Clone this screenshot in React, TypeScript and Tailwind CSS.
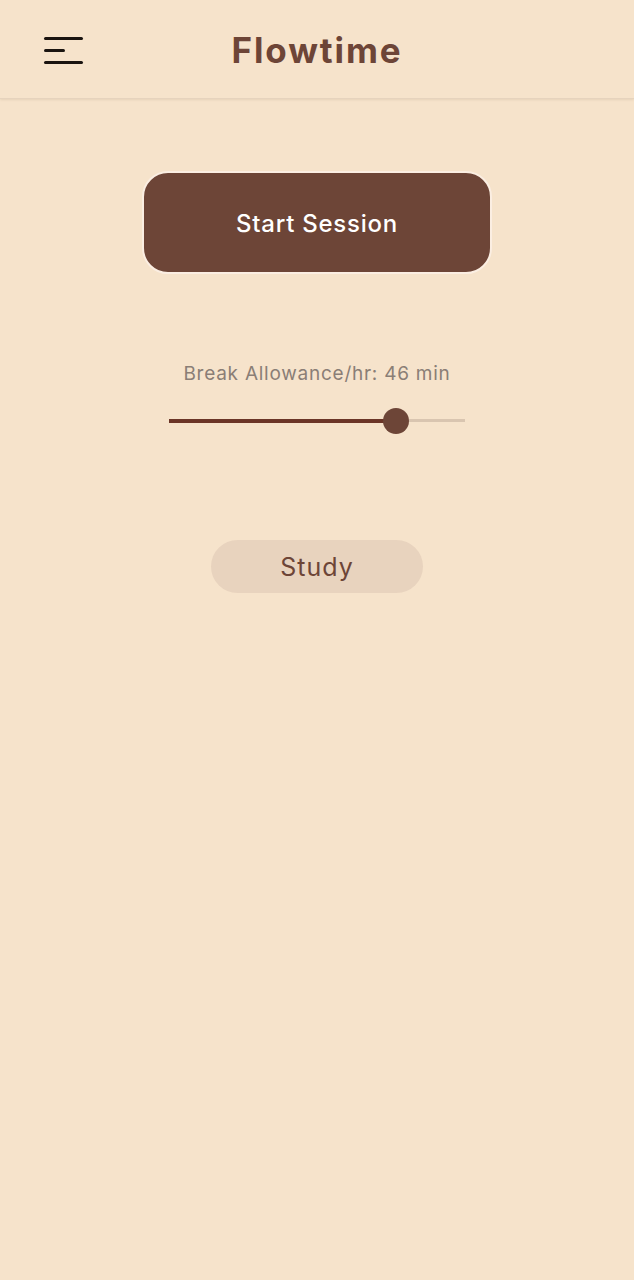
const App = () => {
  const value = 46;
  const pct = ((value - 0) / 60) * 100;

  return (
    <div className="min-h-screen w-full bg-[#f6e3cb] font-['Inter',sans-serif]">
      <header className="relative flex h-[99px] items-center justify-center border-b border-[#e6d3bd] shadow-[0_1px_2px_rgba(120,90,60,0.12)]">
        <button className="absolute left-[44px] top-[37px] flex w-[40px] flex-col gap-[9px]">
          <span className="block h-[3px] w-[39px] rounded-full bg-[#1a1410]" />
          <span className="block h-[3px] w-[21px] rounded-full bg-[#1a1410]" />
          <span className="block h-[3px] w-[39px] rounded-full bg-[#1a1410]" />
        </button>
        <h1 className="mt-[3px] text-[35px] font-bold tracking-[1.9px] text-[#6d4537]">Flowtime</h1>
      </header>

      <main className="flex flex-col items-center">
        <button className="mt-[72px] flex h-[103px] w-[350px] items-center justify-center rounded-[26px] border-2 border-[#fbeee2] bg-[#6d4537] pt-[2px] text-[24px] font-medium tracking-[0.75px] text-white">
          Start Session
        </button>

        <p className="mt-[86px] text-[19px] tracking-[0.75px] text-[#8a7e76]">Break Allowance/hr: {value} min</p>

        <div className="relative mt-[19px] h-[26px] w-[296px]">
          <div className="absolute left-0 right-0 top-[11.5px] h-[3px] bg-[#d9c5b0]" />
          <div className="absolute left-0 top-[11px] h-[4px] bg-[#6b3527]" style={{ width: `${pct}%` }} />
          <div
            className="absolute top-0 h-[26px] w-[26px] -translate-x-1/2 rounded-full bg-[#6d4537]"
            style={{ left: `${pct}%` }}
          />
        </div>

        <button className="mt-[106px] flex h-[53px] w-[212px] items-center justify-center rounded-full bg-[#e8d3be] pt-[3px] text-[25px] tracking-[1px] text-[#6d4537]">
          Study
        </button>
      </main>
    </div>
  );
};

export default App;
